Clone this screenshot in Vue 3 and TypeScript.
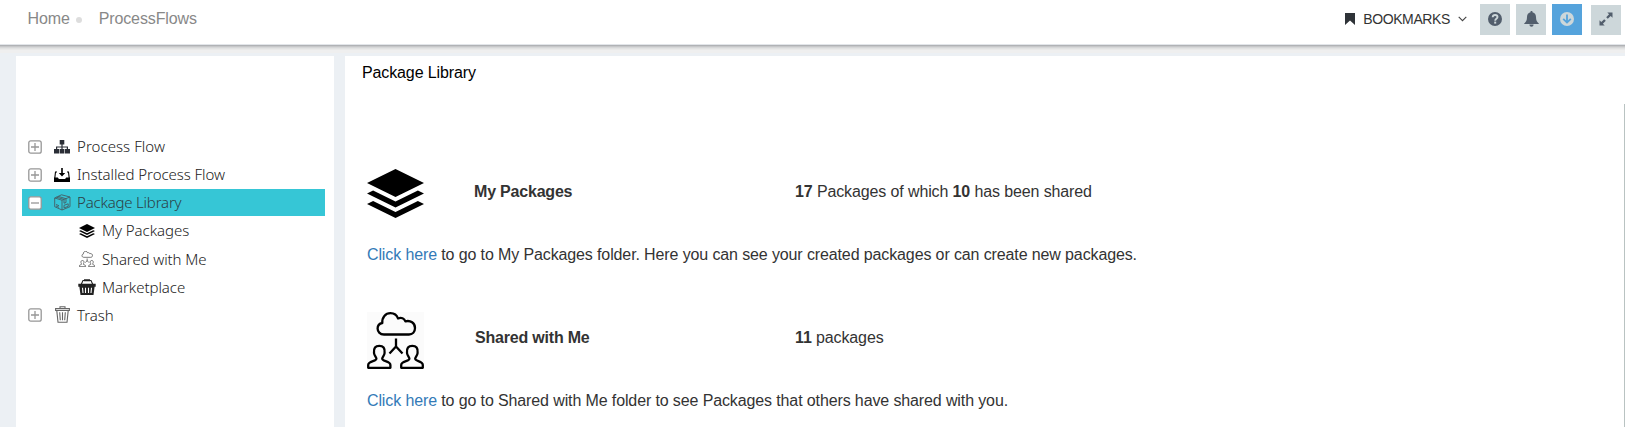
<script setup lang="ts">
interface TreeItem {
  label: string
  icon: string
  toggle?: 'plus' | 'minus'
  child?: boolean
  active?: boolean
  cls: string
}

const tree: TreeItem[] = [
  { label: 'Process Flow', icon: 'sitemap', toggle: 'plus', cls: 't-flow' },
  { label: 'Installed Process Flow', icon: 'install', toggle: 'plus', cls: 't-installed' },
  { label: 'Package Library', icon: 'box', toggle: 'minus', active: true, cls: 't-library' },
  { label: 'My Packages', icon: 'layers', child: true, cls: 't-mine' },
  { label: 'Shared with Me', icon: 'shared', child: true, cls: 't-shared' },
  { label: 'Marketplace', icon: 'basket', child: true, cls: 't-market' },
  { label: 'Trash', icon: 'trash', toggle: 'plus', cls: 't-trash' },
]
</script>

<template>
  <div class="page">
    <header class="topbar">
      <nav class="crumbs">
        <span>Home</span>
        <i class="dot"></i>
        <span>ProcessFlows</span>
      </nav>
      <div class="bookmarks">
        <svg class="bm" width="10" height="12" viewBox="0 0 10 12"><path d="M0 0H10V12L5 7.6L0 12Z" fill="#2f3338" /></svg>
        <span>BOOKMARKS</span>
        <svg class="chev" width="9" height="6" viewBox="0 0 9 6"><path d="M.7 .8L4.5 4.6L8.3 .8" fill="none" stroke="#444" stroke-width="1.1" /></svg>
      </div>
      <div class="actions">
        <button class="act">
          <svg width="14" height="14" viewBox="0 0 14 14">
            <circle cx="7" cy="7" r="7" fill="#525e6c" />
            <path d="M4.7 5.2C4.8 3.6 5.8 3 7.1 3C8.5 3 9.5 3.8 9.5 5.1C9.5 6.9 7.2 6.7 7.2 8.7" fill="none" stroke="#cdd7da" stroke-width="1.9" />
            <rect x="6.2" y="9.6" width="2" height="2" fill="#cdd7da" />
          </svg>
        </button>
        <button class="act">
          <svg width="15" height="16" viewBox="0 0 15 16">
            <path d="M7.5 0C8.3 0 8.6.5 8.5 1.2C11 1.8 12 3.8 12 6C12 9.5 13 11 14.8 12.4V13H.2V12.4C2 11 3 9.5 3 6C3 3.8 4 1.8 6.5 1.2C6.4.5 6.7 0 7.5 0Z" fill="#525e6c" />
            <path d="M5.4 13.4H9.6C9.5 16.4 5.5 16.4 5.4 13.4Z" fill="#525e6c" />
          </svg>
        </button>
        <button class="act blue">
          <svg width="14" height="14" viewBox="0 0 14 14">
            <circle cx="7" cy="7" r="7" fill="#cdd7da" />
            <path d="M7 2.6V10.4M3.2 6.8L7 10.6L10.8 6.8" fill="none" stroke="#55a3dc" stroke-width="1.8" />
          </svg>
        </button>
        <button class="act last">
          <svg width="14" height="14" viewBox="0 0 14 14">
            <path d="M8.3 .5H13.5V5.7L11.7 3.9L8.8 6.8L7.2 5.2L10.1 2.3ZM5.7 13.5H.5V8.3L2.3 10.1L5.2 7.2L6.8 8.8L3.9 11.7Z" fill="#525e6c" />
          </svg>
        </button>
      </div>
    </header>

    <svg class="defs" width="0" height="0">
      <defs>
        <symbol id="layers" viewBox="0 0 56 49" preserveAspectRatio="none">
          <path d="M28 0L56 14L28 28L0 14ZM0 24.5L6 21.5L28 32.5L50 21.5L56 24.5L28 38.5ZM0 35L6 32L28 43L50 32L56 35L28 49Z" />
        </symbol>
        <symbol id="shared" viewBox="0 0 57 57">
          <g fill="none" stroke="currentColor" stroke-width="2.3" stroke-linejoin="round">
            <path d="M17 22.5C12.8 22.5 10.6 19.5 10.6 16.6C10.6 13.4 12.8 11.4 15.3 11C14.9 5.2 18.5 1.2 23.5 1.2C27.5 1.2 30 3.5 31 6.5C34.4 5 37.3 6.5 38.4 9.3C43.5 8 48 11 48 16C48 20 45.4 22.5 42 22.5Z" />
            <path d="M29 26.5V36M29 34.5L22.5 41.5M29 34.5L35.5 41.5" />
            <path d="M7 41C6.4 36 8.5 33.8 12.3 33.8C16.1 33.8 18.2 36 17.6 41C17.4 43.5 15.5 44.8 15.2 46.6C15 49.5 23.4 48.7 23.4 53V55.8H1.2V53C1.2 48.7 9.6 49.5 9.4 46.6C9.1 44.8 7.2 43.5 7 41Z" />
            <path transform="translate(33 0)" d="M7 41C6.4 36 8.5 33.8 12.3 33.8C16.1 33.8 18.2 36 17.6 41C17.4 43.5 15.5 44.8 15.2 46.6C15 49.5 22.8 48.7 22.8 53V55.8H1.2V53C1.2 48.7 9.6 49.5 9.4 46.6C9.1 44.8 7.2 43.5 7 41Z" />
          </g>
        </symbol>
      </defs>
    </svg>

    <div class="body">
      <aside class="side">
        <div v-for="item in tree" :key="item.label" class="row" :class="{ child: item.child, active: item.active }">
          <svg v-if="item.toggle" class="toggle" width="14" height="14" viewBox="0 0 14 14">
            <rect x=".8" y=".8" width="12.4" height="12.4" rx="2" fill="#fff" stroke="#979797" stroke-width="1.3" />
            <path :d="item.toggle === 'plus' ? 'M3 7H11M7 3V11' : 'M3 7H11'" stroke="#979797" stroke-width="1.3" />
          </svg>
          <span class="icon">
            <svg v-if="item.icon === 'sitemap'" width="16" height="14" viewBox="0 0 16 14">
              <path d="M8 4V10M2.6 10V7H13.4V10" fill="none" stroke="#2a2e36" stroke-width="1.2" />
              <path d="M5.7 0H10.3V4.6H5.7ZM0 9H5V13.6H0ZM5.6 9H10.4V13.6H5.6ZM11 9H16V13.6H11Z" fill="#2a2e36" />
            </svg>
            <svg v-else-if="item.icon === 'install'" width="16" height="14" viewBox="0 0 16 14">
              <path d="M.8 10L1.5 4H3M15.2 10L14.5 4H13" fill="none" stroke="#000" stroke-width="1.1" />
              <path d="M7.2 0H8.8V5H11.2L8 8.6L4.8 5H7.2ZM0 9.4H3.8L4.9 11H11.1L12.2 9.4H16V14H0Z" />
            </svg>
            <svg v-else-if="item.icon === 'box'" width="17" height="17" viewBox="0 0 17 17" fill="none" stroke="#455e64" stroke-width=".9">
              <path d="M.7 4L7.5 .8L16 3L8 6.2ZM.7 4V12.7L8 16V6.2M16 3V12.7L8 16M4.2 2.4L12 4.7V8.5L10 9.2V5.4L2.4 3.2M2 10.5L5 11.7M2 12L5 13.3M10 11.3L14.2 9.8V12.4L10 13.9Z" />
            </svg>
            <svg v-else-if="item.icon === 'layers'" width="16" height="14"><use href="#layers" /></svg>
            <svg v-else-if="item.icon === 'shared'" width="16" height="16" class="gray"><use href="#shared" /></svg>
            <svg v-else-if="item.icon === 'basket'" width="18" height="16" viewBox="0 0 18 16">
              <path d="M3.2 5.5L5 1.5H13L14.8 5.5" fill="none" stroke="#222" stroke-width="1.1" />
              <path d="M6 .3H12V2.3H6ZM.3 4.8H17.7V7.8H.3ZM1.3 7H16.7L15.5 16H2.5Z" fill="#222" />
              <path d="M4.5 8.7L5 14M7.5 8.7V14M10.5 8.7V14M13.5 8.7L13 14" stroke="#fff" stroke-width="1.1" />
            </svg>
            <svg v-else width="15" height="17" viewBox="0 0 15 17" fill="none" stroke="#666" stroke-width="1.1">
              <path d="M.6 2.5H14.4V4.4H.6ZM5 2.3V.7H10V2.3M1.8 4.6L3 16.3H12L13.2 4.6M4.7 6.3L5.3 14.3M7.5 6.3V14.3M10.3 6.3L9.7 14.3" />
            </svg>
          </span>
          <span class="label" :class="item.cls">{{ item.label }}</span>
        </div>
      </aside>

      <main class="main">
        <h1>Package Library</h1>
        <section class="pkg">
          <div class="summary">
            <svg class="big" width="56" height="49"><use href="#layers" /></svg>
            <strong class="name">My Packages</strong>
            <span><b>17</b> Packages of which <b>10</b> has been shared</span>
          </div>
          <p><a>Click here</a> to go to My Packages folder. Here you can see your created packages or can create new packages.</p>
        </section>
        <section class="pkg second">
          <div class="summary">
            <svg class="big people" width="57" height="57"><use href="#shared" /></svg>
            <strong class="name">Shared with Me</strong>
            <span><b>11</b> packages</span>
          </div>
          <p><a>Click here</a> to go to Shared with Me folder to see Packages that others have shared with you.</p>
        </section>
        <i class="scroll"></i>
      </main>
    </div>
  </div>
</template>

<style>
body { margin: 0; overflow: hidden; }
</style>

<style scoped>
.page {
  width: 1625px;
  height: 427px;
  display: flex;
  flex-direction: column;
  overflow: hidden;
  background: #ecf0f4;
  color: #333;
  font: 16px/20px "Liberation Sans", Arial, sans-serif;
  letter-spacing: -.12px;
}
.topbar {
  flex: none;
  height: 56px;
  box-sizing: border-box;
  display: flex;
  align-items: flex-start;
  background: linear-gradient(#fff 0 44px, #e2e5e9 44px 45px, #b0b2b5 45px 46px, #c6c7c9 46px 47px, #d6d7d8 47px 48px, #e1e2e2 48px 49px, #e9e9e9 49px 50px, #efefef 50px 53px, #ecf0f4 53px);
}
.crumbs { display: flex; align-items: center; height: 20px; padding: 9px 0 0 27.5px; color: #888; }
.dot { width: 6px; height: 6px; border-radius: 50%; background: #ddd; margin: 2px 17px 0 6px; }
.bookmarks { display: flex; align-items: center; margin-left: auto; height: 20px; padding-top: 9px; font-size: 14px; letter-spacing: -.38px; }
.bm { margin-right: 8px; }
.chev { margin-left: 8px; }
.actions { display: flex; gap: 6px; padding: 4px 4px 0 13px; }
.act { width: 30px; height: 31px; padding: 0 0 2px; border: 0; background: #cdd7da; display: flex; align-items: center; justify-content: center; }
.blue { background: #55a3dc; }
.last { margin: 1px 0 0 3px; height: 30px; }
.defs { position: absolute; }
.body { flex: 1; display: flex; padding-left: 16px; gap: 11px; }
.side { width: 318px; box-sizing: border-box; padding: 77px 9px 0 6px; background: #fff; }
.row { display: flex; align-items: center; height: 27px; margin-bottom: 1px; padding-left: 6px; }
.active { background: #36c6d6; }
.child { padding-left: 57px; }
.toggle { margin-right: 12px; }
.icon { width: 16px; margin-right: 7px; display: flex; justify-content: center; }
.icon svg { flex: none; }
.gray { color: #333; }
.label { font-family: "Noto Sans", "Open Sans", sans-serif; font-weight: 300; font-size: 15px; color: #222; white-space: nowrap; margin-top: -2px; letter-spacing: -.06px; }
.t-flow { letter-spacing: .06px; }
.t-library { letter-spacing: -.2px; color: #2c4045; }
.t-shared { letter-spacing: -.1px; margin-top: 0; }
.t-market, .t-trash { margin-top: 0; }
.main { flex: 1; background: #fff; position: relative; }
h1 { margin: 7px 0 0 17px; font-size: 16px; line-height: 20px; font-weight: 400; color: #000; }
.pkg { padding: 85px 0 0 22px; }
.summary { display: flex; align-items: center; height: 50px; }
.big { width: 57px; margin-right: 50px; flex: none; }
.name { width: 321px; letter-spacing: -.2px; }
.summary span, .name { margin-top: -3px; }
p { margin: 27px 0 0; white-space: nowrap; }
a { color: #337ab7; }
.second { padding-top: 47px; }
.second .summary { height: 57px; }
.second .summary span, .second .name { margin-top: -5px; }
.second .big { margin-right: 51px; }
.second .name { width: 320px; }
.second p { margin-top: 22px; }
.people { color: #000; background: #fbfbfb; }
.scroll { position: absolute; right: 0; top: 48px; width: 1px; bottom: 0; background: #b9c3c2; }
</style>
